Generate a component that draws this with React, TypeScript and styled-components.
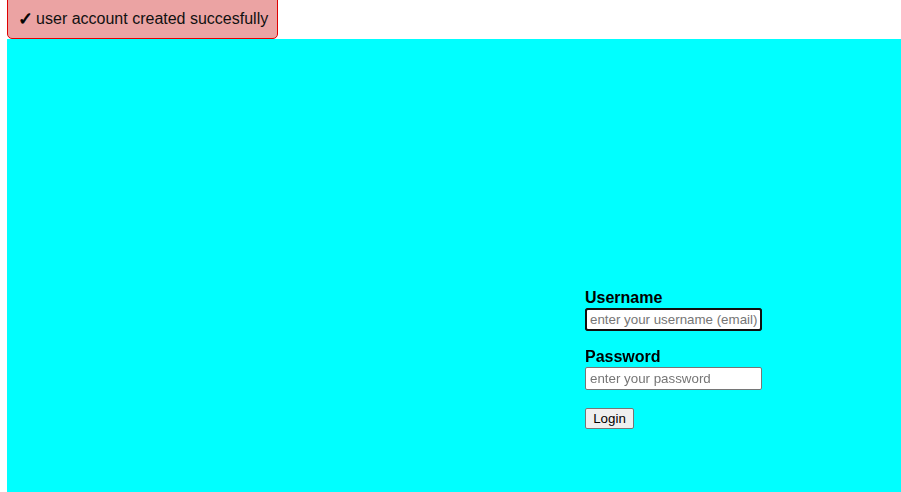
import React from "react";
import styled, { createGlobalStyle } from "styled-components";

const Global = createGlobalStyle`
  html, body { margin: 0; padding: 0; background: #ffffff; }
  body { font-family: "Liberation Sans", Arial, sans-serif; overflow: hidden; }
`;

const Page = styled.div`
  display: flex;
  flex-direction: column;
  padding-left: 7px;
  height: 492px;
  box-sizing: border-box;
`;

const Toast = styled.div`
  align-self: flex-start;
  box-sizing: border-box;
  height: 40px;
  margin-top: -1px;
  position: relative;
  z-index: 1;
  display: flex;
  align-items: center;
  gap: 3px;
  padding: 0 9px 0 10px;
  background: #eba3a3;
  border: 1px solid #e00000;
  border-radius: 0 0 5px 5px;
  color: #111;
  font-size: 16px;
`;

const Check = styled.span`
  font-family: "DejaVu Sans", sans-serif;
  font-size: 18px;
  line-height: 18px;
  color: #000;
  -webkit-text-stroke: 0.7px #000;
  margin-top: -1px;
`;

const Stage = styled.main`
  flex: 1;
  background: #00ffff;
  display: flex;
  padding: 250px 0 0 578px;
`;

const Form = styled.form`
  display: flex;
  flex-direction: column;
  align-items: flex-start;
`;

const Label = styled.label`
  font-weight: bold;
  font-size: 16px;
  line-height: 18px;
  color: #000;
  margin-bottom: 1px;
`;

const Input = styled.input<{ $gap?: number }>`
  font-family: "Liberation Sans", Arial, sans-serif;
  font-size: 13.33px;
  width: 177px;
  height: 23px;
  box-sizing: border-box;
  padding: 1px 2px 1px 4px;
  border: 1px solid #767676;
  border-radius: 2px;
  background: #fff;
  margin: 0 0 ${(p) => p.$gap ?? 17}px 0;
  &::placeholder { color: #757575; }
  &:focus {
    outline: 2px solid #101010;
    outline-offset: -2px;
    border-color: #101010;
    border-radius: 3px;
  }
`;

const Button = styled.button`
  font-family: "Liberation Sans", Arial, sans-serif;
  font-size: 13.33px;
  padding: 1px 7px;
  width: 49px;
  height: 21px;
  border: 1px solid #767676;
  border-radius: 2px;
  background: #efefef;
  color: #000;
`;

export default function App() {
  return (
    <>
      <Global />
      <Page>
        <Toast>
          <Check>✓</Check>
          <span>user account created succesfully</span>
        </Toast>
        <Stage>
          <Form onSubmit={(e) => e.preventDefault()}>
            <Label htmlFor="u">Username</Label>
            <Input id="u" autoFocus placeholder="enter your username (email)" />
            <Label htmlFor="p">Password</Label>
            <Input id="p" type="password" $gap={18} placeholder="enter your password" />
            <Button type="submit">Login</Button>
          </Form>
        </Stage>
      </Page>
    </>
  );
}
